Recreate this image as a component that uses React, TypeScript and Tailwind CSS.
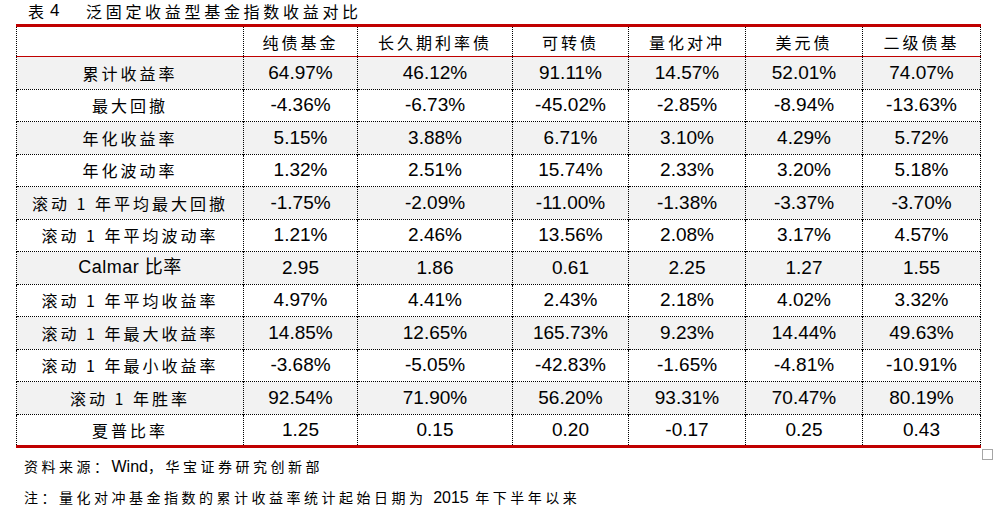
import React from 'react';

const cjk = '[font-family:"Noto_Sans_CJK_SC","Liberation_Sans",sans-serif]';

const headers = ['纯债基金', '长久期利率债', '可转债', '量化对冲', '美元债', '二级债基'];

const rows: [string, string[]][] = [
  ['累计收益率', ['64.97%', '46.12%', '91.11%', '14.57%', '52.01%', '74.07%']],
  ['最大回撤', ['-4.36%', '-6.73%', '-45.02%', '-2.85%', '-8.94%', '-13.63%']],
  ['年化收益率', ['5.15%', '3.88%', '6.71%', '3.10%', '4.29%', '5.72%']],
  ['年化波动率', ['1.32%', '2.51%', '15.74%', '2.33%', '3.20%', '5.18%']],
  ['滚动 1 年平均最大回撤', ['-1.75%', '-2.09%', '-11.00%', '-1.38%', '-3.37%', '-3.70%']],
  ['滚动 1 年平均波动率', ['1.21%', '2.46%', '13.56%', '2.08%', '3.17%', '4.57%']],
  ['Calmar 比率', ['2.95', '1.86', '0.61', '2.25', '1.27', '1.55']],
  ['滚动 1 年平均收益率', ['4.97%', '4.41%', '2.43%', '2.18%', '4.02%', '3.32%']],
  ['滚动 1 年最大收益率', ['14.85%', '12.65%', '165.73%', '9.23%', '14.44%', '49.63%']],
  ['滚动 1 年最小收益率', ['-3.68%', '-5.05%', '-42.83%', '-1.65%', '-4.81%', '-10.91%']],
  ['滚动 1 年胜率', ['92.54%', '71.90%', '56.20%', '93.31%', '70.47%', '80.19%']],
  ['夏普比率', ['1.25', '0.15', '0.20', '-0.17', '0.25', '0.43']],
];

const colWidths = ['w-[227px]', 'w-[114px]', 'w-[155px]', 'w-[116px]', 'w-[117px]', 'w-[117px]', 'w-[118px]'];

const App = () => {
  return (
    <div className="w-[996px] h-[513px] bg-white text-black overflow-hidden relative">
      <div className={`${cjk} text-[16px] leading-[22px] h-[23px] pl-[28px] flex items-start`}>
        <span>表</span>
        <span className='[font-family:"Liberation_Sans",sans-serif] text-[17px] ml-[6px] w-[36px]'>4</span>
        <span className="tracking-[3.7px]">泛固定收益型基金指数收益对比</span>
      </div>
      <div className="pl-[16px] pt-[1px]">
        <table className="border-collapse table-fixed w-[964px] border-t-[3px] border-t-[#c00000] border-b-[3px] border-b-[#c00000]">
          <colgroup>
            {colWidths.map((w, i) => (
              <col key={i} className={w} />
            ))}
          </colgroup>
          <thead>
            <tr className="h-[31px] border-b border-b-[#c00000]">
              <th className="border-l border-r border-dotted border-black"></th>
              {headers.map((h) => (
                <th
                  key={h}
                  className={`${cjk} font-normal text-[16px] tracking-[3px] text-center border-l border-r border-dotted border-black`}
                >
                  {h}
                </th>
              ))}
            </tr>
          </thead>
          <tbody>
            {rows.map(([label, vals], i) => (
              <tr
                key={label}
                className={`h-[32.5px] ${i % 2 === 0 ? 'bg-[#f2f2f2]' : 'bg-white'} ${i < rows.length - 1 ? 'border-b border-dotted border-b-black' : ''}`}
              >
                <td
                  className={`${label.startsWith('Calmar') ? '[font-family:"Liberation_Sans","Noto_Sans_CJK_SC",sans-serif] text-[18px] tracking-[0.5px]' : `${cjk} text-[16px] tracking-[3px]`} text-center border-l border-r border-dotted border-black p-0`}
                >
                  {label}
                </td>
                {vals.map((v, j) => (
                  <td
                    key={j}
                    className='[font-family:"Liberation_Sans",Arial,sans-serif] text-[19px] text-center border-l border-r border-dotted border-black p-0'
                  >
                    {v}
                  </td>
                ))}
              </tr>
            ))}
          </tbody>
        </table>
      </div>
      <div className="absolute left-[982px] top-[449px] w-[11px] h-[11px] border border-[#a6a6a6]" />
      <div className={`${cjk} text-[14px] tracking-[3.5px] pl-[24px] mt-[8px] leading-[20px]`}>
        资料来源：<span className='[font-family:"Liberation_Sans",sans-serif] tracking-normal text-[16px]'>Wind</span>，华宝证券研究创新部
      </div>
      <div className={`${cjk} text-[14px] tracking-[3.5px] pl-[24px] mt-[10px] leading-[20px]`}>
        注：量化对冲基金指数的累计收益率统计起始日期为 <span className='[font-family:"Liberation_Sans",sans-serif] tracking-normal text-[16px]'>2015</span> 年下半年以来
      </div>
    </div>
  );
};

export default App;
